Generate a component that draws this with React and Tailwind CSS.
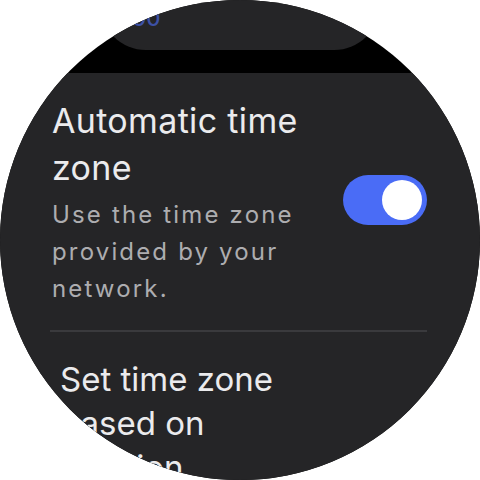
import React from 'react';

function Toggle({ on }) {
  return (
    <div
      className={`mb-[4px] flex h-[50px] w-[84px] shrink-0 items-center rounded-full px-[5px] ${
        on ? 'justify-end bg-[#4a6cf6]' : 'justify-start bg-[#5b5b60]'
      }`}
    >
      <div className="h-[40px] w-[40px] rounded-full bg-white" />
    </div>
  );
}

export default function App() {
  const font = { fontFamily: 'Inter, "Noto Sans", sans-serif' };

  return (
    <div className="h-[480px] w-[480px] bg-white" style={font}>
      <div className="flex h-[480px] w-[480px] flex-col overflow-hidden rounded-full bg-black">
        {/* card above, mostly scrolled off */}
        <div className="mx-auto flex h-[50px] w-[280px] shrink-0 items-end rounded-b-[46px] bg-[#252527] pb-[21px] pl-[2px]">
          <span className="text-[22px] font-medium leading-none text-[#3d51a6]">10:00</span>
        </div>

        <div className="mt-[23px] flex flex-1 flex-col bg-[#252527] pl-[52px] pr-[53px] pt-[24px]">
          <div className="flex items-center gap-[36px]">
            <div className="min-w-0 flex-1">
              <p className="text-[34px] leading-[47px] tracking-[0.01em] text-[#ebebed]">Automatic time zone</p>
              <p className="mt-[5px] text-[24px] leading-[37px] tracking-[0.09em] text-[#adadb0]">
                Use the time zone provided by your network.
              </p>
            </div>
            <Toggle on />
          </div>

          <div className="ml-[-2px] mt-[23px] h-[2px] bg-[#3a3a3d]" />

          <p className="mt-[25px] pl-[8px] pr-[100px] text-[33px] leading-[44px] text-[#ebebed]">
            Set time zone based on location
          </p>
        </div>
      </div>
    </div>
  );
}
